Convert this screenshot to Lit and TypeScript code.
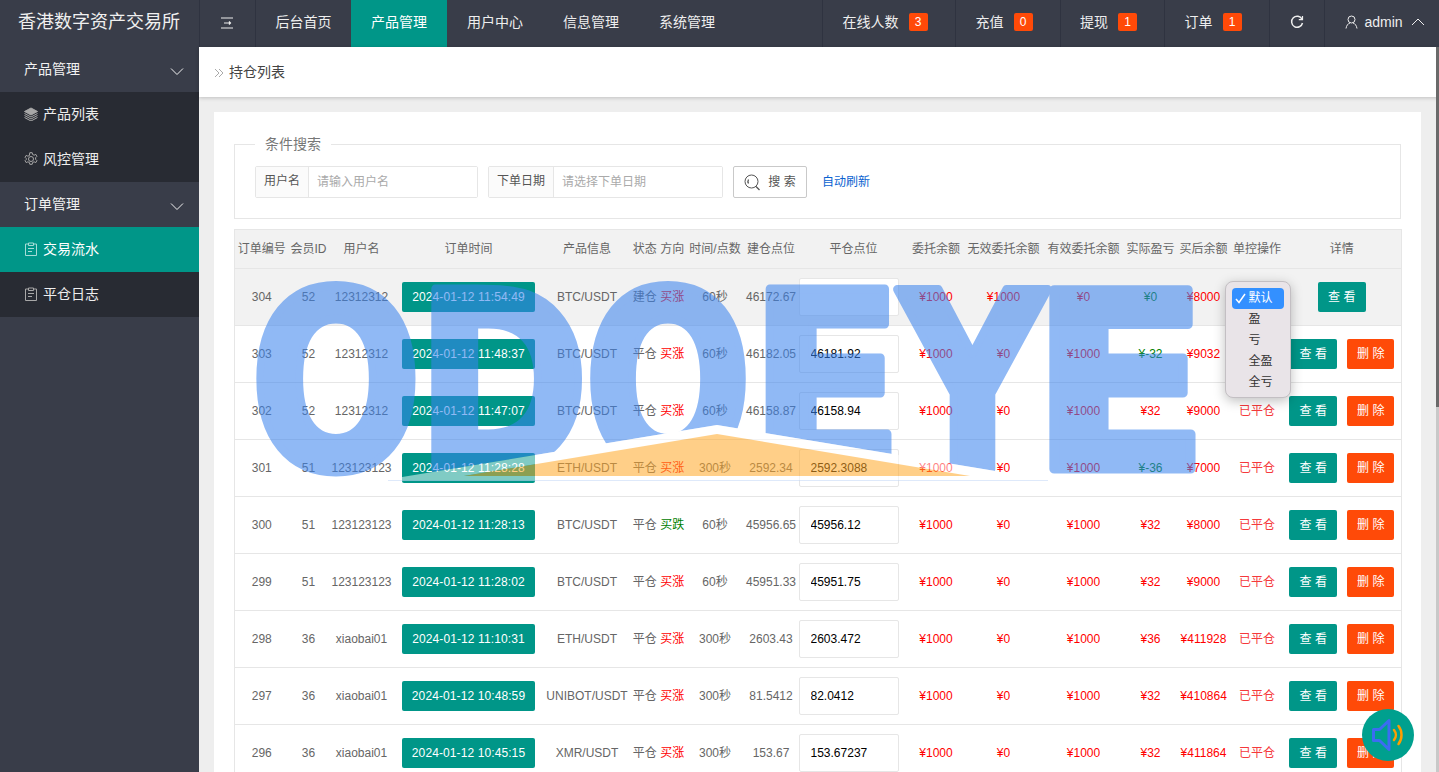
import { LitElement, html, css, svg } from 'lit';
import { customElement } from 'lit/decorators.js';

interface Row {
  id: number;
  uid: number;
  name: string;
  time: string;
  product: string;
  state: string;
  dir: string;
  up: boolean;
  period: string;
  open: string;
  close: string;
  entrust: string;
  invalid: string;
  valid: string;
  profit: string;
  loss: boolean;
  after: string;
}

const row = (
  id: number, uid: number, name: string, time: string, product: string, period: string,
  open: string, close: string, profit: string, after: string,
): Row => ({
  id, uid, name, time, product, state: '平仓', dir: '买涨', up: true, period, open, close,
  entrust: '¥1000', invalid: '¥0', valid: '¥1000', profit, loss: profit.includes('-'), after,
});

const ROWS: Row[] = [
  { ...row(304, 52, '12312312', '11:54:49', 'BTC/USDT', '60秒', '46172.67', '', '¥0', '¥8000'), state: '建仓', invalid: '¥1000', valid: '¥0', loss: true },
  row(303, 52, '12312312', '11:48:37', 'BTC/USDT', '60秒', '46182.05', '46181.92', '¥-32', '¥9032'),
  row(302, 52, '12312312', '11:47:07', 'BTC/USDT', '60秒', '46158.87', '46158.94', '¥32', '¥9000'),
  row(301, 51, '123123123', '11:28:28', 'ETH/USDT', '300秒', '2592.34', '2592.3088', '¥-36', '¥7000'),
  { ...row(300, 51, '123123123', '11:28:13', 'BTC/USDT', '60秒', '45956.65', '45956.12', '¥32', '¥8000'), dir: '买跌', up: false },
  row(299, 51, '123123123', '11:28:02', 'BTC/USDT', '60秒', '45951.33', '45951.75', '¥32', '¥9000'),
  row(298, 36, 'xiaobai01', '11:10:31', 'ETH/USDT', '300秒', '2603.43', '2603.472', '¥36', '¥411928'),
  row(297, 36, 'xiaobai01', '10:48:59', 'UNIBOT/USDT', '300秒', '81.5412', '82.0412', '¥32', '¥410864'),
  row(296, 36, 'xiaobai01', '10:45:15', 'XMR/USDT', '300秒', '153.67', '153.67237', '¥32', '¥411864'),
];

const HEADS = ['订单编号', '会员ID', '用户名', '订单时间', '产品信息', '状态 方向', '时间/点数', '建仓点位', '平仓点位', '委托余额', '无效委托余额', '有效委托余额', '实际盈亏', '买后余额', '单控操作', '详情'];
const WIDTHS = [54, 40, 72, 136, 95, 54, 59, 53, 102, 66, 76, 84, 50, 56, 51, 119];
// columns whose text sits off the middle of the cell
const CELL_CLASS: Record<number, string> = { 2: 'n3', 4: 'n5', 8: 'n9', 9: 'n10' };
const MENU = ['默认', '盈', '亏', '全盈', '全亏'];

// letters of the logo laid over the page: [char, x, width]
const LOGO: [string, number, number][] = [
  ['O', 250, 172],
  ['D', 416, 173],
  ['O', 584, 168],
  ['E', 749, 155],
  ['Y', 899, 147],
  ['E', 1030, 180],
];

const chevron = (up = false) => html`<svg class="chev" width="14" height="14" viewBox="0 0 14 14" fill="none" stroke="currentColor" stroke-width="1"><path d=${up ? 'M1 10l6-6 6 6' : 'M1 4.500l6 6 6-6'}></path></svg>`;
const clipboard = html`<svg width="14" height="14" viewBox="0 0 14 14" fill="none" stroke="currentColor" stroke-width="1"><path d="M4 2H1.500v11.500h11V2H10"></path><path d="M4.500 1h5v2.500h-5zM4 6.500h6M4 9.500h4"></path></svg>`;

@customElement('app-root')
export class AppRoot extends LitElement {
  static styles = css`
    :host {
      display: block;
      position: relative;
      width: 1439px;
      height: 772px;
      overflow: hidden;
      font-family: "Liberation Sans", "Noto Sans CJK SC", sans-serif;
      font-size: 12px;
      line-height: 16px;
      color: #666;
      background: #eee;
    }
    * { box-sizing: border-box; }

    .top {
      display: flex;
      height: 47px;
      background: #393d49;
      color: #fff;
      font-size: 14px;
      line-height: 20px;
    }
    .brand {
      width: 199px;
      padding-left: 18px;
      font-size: 18px;
      line-height: 44px;
      color: #f0f0f0;
    }
    .tn {
      display: flex;
      align-items: center;
      justify-content: center;
      padding-bottom: 3px;
      border-left: 1px solid #2f3340;
      color: #eee;
      white-space: nowrap;
    }
    .tn.toggle { width: 56px; padding: 0 2px 2px 0; }
    .tn.menu { width: 96px; border-left: 0; }
    .tn.toggle + .tn.menu { border-left: 1px solid #2f3340; }
    .tn.on { background: #009688; color: #fff; }
    .spacer { flex: 1; }
    .tn.count { padding-right: 8px; }
    .badge {
      display: inline-block;
      width: 19px;
      height: 18px;
      margin-left: 10px;
      border-radius: 2px;
      background: #ff4a08;
      color: #fff;
      font-size: 12px;
      line-height: 18px;
      text-align: center;
    }
    .user { padding-left: 6px; gap: 6px; }
    .user .chev { margin-left: 2px; }

    .body { display: flex; height: 725px; }
    .side { width: 199px; background: #393d49; color: #f2f2f2; font-size: 14px; line-height: 20px; }
    .si {
      display: flex;
      align-items: center;
      height: 45px;
      padding: 0 0 1px 24px;
      gap: 5px;
    }
    .si.sub { background: #282b33; color: #eee; }
    .si.sub svg { color: #a8a8a8; }
    .si.on { background: #009688; color: #fff; }
    .si.on svg { color: #a6dcd6; }
    .si.head { justify-content: space-between; padding-right: 15px; }
    .si.head .chev { margin-top: 3px; }

    .main { flex: 1; min-width: 0; }
    .crumb {
      display: flex;
      align-items: center;
      gap: 5px;
      height: 50px;
      padding-left: 15px;
      padding-bottom: 1px;
      background: #fff;
      box-shadow: 0 1px 4px rgba(0, 0, 0, .2);
      font-size: 14px;
      line-height: 20px;
      color: #444;
    }
    .crumb svg { margin-top: 2px; color: #aaa; }
    .card {
      margin: 15px 18px 0 15px;
      padding: 20px;
      background: #fff;
    }
    fieldset {
      margin: 2px 0 0;
      padding: 12px 20px 20px;
      border: 1px solid #e6e6e6;
    }
    legend { padding: 0 10px; font-size: 14px; line-height: 20px; color: #777; }
    .search { display: flex; gap: 10px; align-items: center; }
    .grp { display: flex; height: 32px; border: 1px solid #e6e6e6; border-radius: 2px; }
    .grp label {
      padding: 0 8px;
      line-height: 29px;
      background: #fbfbfb;
      border-right: 1px solid #e6e6e6;
      color: #555;
      white-space: nowrap;
    }
    .grp input {
      border: 0;
      outline: 0;
      padding: 0 8px;
      font: inherit;
      background: #fff;
    }
    .grp input::placeholder { color: #aaa; }
    .g1 { width: 223px; }
    .g2 { width: 235px; }
    .g1 input, .g2 input { flex: 1; min-width: 0; }
    .sbtn {
      display: flex;
      align-items: center;
      justify-content: center;
      gap: 7px;
      width: 74px;
      height: 32px;
      border: 1px solid #c9c9c9;
      border-radius: 2px;
      color: #555;
    }
    .link { margin-left: 5px; color: #0a62d0; }

    table {
      width: 1167px;
      margin-top: 10px;
      table-layout: fixed;
      border-collapse: collapse;
      border: 1px solid #e6e6e6;
    }
    th, td {
      padding: 0;
      text-align: center;
      font-weight: 400;
      white-space: nowrap;
      border-bottom: 1px solid #e6e6e6;
    }
    th { height: 39px; background: #f2f2f2; color: #666; }
    td { height: 57px; position: relative; }
    tr.hl td { background: #f2f2f2; }
    .n3 { padding-right: 6px; }
    .n5 { padding-left: 6px; }
    th.n9 { padding-left: 10px; }
    .n10 { padding-left: 7px; }
    .red { color: #f00; }
    .green { color: #008000; }
    .closed { color: #f5393c; }
    .tbtn, .btn {
      display: inline-block;
      height: 30px;
      border-radius: 2px;
      color: #fff;
      line-height: 30px;
      text-align: center;
    }
    .tbtn { width: 133px; background: #009688; letter-spacing: .1px; }
    .btn { width: 48px; background: #009688; }
    .btn.del { width: 47px; background: #ff4a08; margin-left: 10px; }
    .price {
      display: block;
      width: 100px;
      height: 38px;
      margin: 0 auto;
      padding-left: 11px;
      border: 1px solid #e6e6e6;
      border-radius: 2px;
      outline: 0;
      background: #fff;
      color: #000;
      font: inherit;
    }

    .logo { position: absolute; left: 0; top: 0; z-index: 10; pointer-events: none; }
    .logo text {
      font-family: "DejaVu Sans", sans-serif;
      font-weight: 700;
      font-size: 246px;
      fill: rgb(58, 130, 238);
      stroke: rgb(58, 130, 238);
      stroke-width: 9px;
      stroke-linejoin: round;
    }

    .pop {
      position: absolute;
      z-index: 20;
      left: -7px;
      top: 12px;
      width: 66px;
      height: 117px;
      padding: 6px 6px 0;
      border: 1px solid #c3bfc3;
      border-radius: 8px;
      background: #e9e4e8;
      box-shadow: 0 3px 12px rgba(0, 0, 0, .25);
      color: #333;
      text-align: left;
    }
    .opt {
      position: relative;
      height: 21px;
      padding-left: 17px;
      line-height: 20px;
      border-radius: 4px;
    }
    .opt.on { background: #3390ff; color: #fff; }
    .opt svg { position: absolute; left: 3px; top: 5px; }

    .bar { position: absolute; right: 0; top: 47px; bottom: 0; width: 3px; background: #c8c8c8; }
    .bar i { display: block; height: 360px; background: #6a6a6a; }

    .horn {
      position: absolute;
      z-index: 30;
      left: 1362px;
      top: 709px;
      width: 52px;
      height: 52px;
      border-radius: 50%;
      background: #00a08e;
    }
  `;

  private logo() {
    return html`<svg class="logo" width="1439" height="772" viewBox="0 0 1439 772">
      <defs>
        <clipPath id="cut"><path d="M0 0H1439V480H1050L717 425 384 480H0Z"></path></clipPath>
      </defs>
      <g clip-path="url(#cut)" opacity=".56">
        ${LOGO.map(([c, x, w]) => svg`<text x=${x} y="469" textLength=${w} lengthAdjust="spacingAndGlyphs">${c}</text>`)}
      </g>
      <path d="M384 480 717 425 1050 480ZM464 476H970L717 434Z" fill="#fff" fill-rule="evenodd" opacity=".5"></path>
      <path d="M464 476 717 434 970 476Z" fill="#ffa726" opacity=".55"></path>
      <path d="M388 480.500H1048" stroke="#c9dcf7" stroke-width="1" opacity=".6"></path>
    </svg>`;
  }

  private popup() {
    return html`<div class="pop">
      ${MENU.map((m, i) => html`<div class="opt ${i === 0 ? 'on' : ''}">
        ${i === 0 ? html`<svg width="11" height="11" viewBox="0 0 11 11" fill="none" stroke="#fff" stroke-width="1.500"><path d="M1 6l3 3.500 6-8.500"></path></svg>` : ''}${m}
      </div>`)}
    </div>`;
  }

  private tr(r: Row, i: number) {
    return html`<tr class=${i === 0 ? 'hl' : ''}>
      <td>${r.id}</td>
      <td>${r.uid}</td>
      <td class="n3">${r.name}</td>
      <td><span class="tbtn">2024-01-12 ${r.time}</span></td>
      <td class="n5">${r.product}</td>
      <td>${r.state} <span class=${r.up ? 'red' : 'green'}>${r.dir}</span></td>
      <td>${r.period}</td>
      <td>${r.open}</td>
      <td><input class="price" .value=${r.close} /></td>
      <td class="red n10">${r.entrust}</td>
      <td class="red">${r.invalid}</td>
      <td class="red">${r.valid}</td>
      <td class=${r.loss ? 'green' : 'red'}>${r.profit}</td>
      <td class="red">${r.after}</td>
      <td class="closed">${i === 0 ? this.popup() : '已平仓'}</td>
      <td>
        <span class="btn">查 看</span>${i === 0 ? '' : html`<span class="btn del">删 除</span>`}
      </td>
    </tr>`;
  }

  render() {
    return html`
      <div class="top">
        <div class="brand">香港数字资产交易所</div>
        <div class="tn toggle">
          <svg width="14" height="12" viewBox="0 0 14 12" fill="none" stroke="currentColor" stroke-width="1.200"><path d="M1 1h12M1 11h12M4 6h6M9 4.500 10.500 6 9 7.500"></path></svg>
        </div>
        <div class="tn menu">后台首页</div>
        <div class="tn menu on">产品管理</div>
        <div class="tn menu">用户中心</div>
        <div class="tn menu">信息管理</div>
        <div class="tn menu">系统管理</div>
        <div class="spacer"></div>
        <div class="tn count" style="width:133px">在线人数<span class="badge">3</span></div>
        <div class="tn count" style="width:105px">充值<span class="badge">0</span></div>
        <div class="tn count" style="width:104px">提现<span class="badge">1</span></div>
        <div class="tn count" style="width:105px">订单<span class="badge">1</span></div>
        <div class="tn" style="width:55px">
          <svg width="14" height="14" viewBox="0 0 14 14" fill="none" stroke="currentColor" stroke-width="1.500"><path d="M12 4.200A5.500 5.500 0 1 0 12.500 8"></path><path d="M12.500 1v3.700H8.800" stroke-width="1.200"></path></svg>
        </div>
        <div class="tn user" style="width:115px">
          <svg width="13" height="14" viewBox="0 0 13 14" fill="none" stroke="currentColor" stroke-width="1"><circle cx="6.500" cy="4.500" r="3.500"></circle><path d="M1 13.500c.5-3 2-5 4-5.500M12 13.500c-.5-3-2-5-4-5.500"></path></svg>
          admin${chevron(true)}
        </div>
      </div>

      <div class="body">
        <div class="side">
          <div class="si head">产品管理${chevron()}</div>
          <div class="si sub">
            <svg width="14" height="14" viewBox="0 0 14 14" fill="none" stroke="currentColor" stroke-width="1"><path d="M7 1 .5 4.500 7 8l6.500-3.500z" fill="currentColor"></path><path d="M.5 6.500 7 10l6.500-3.500M.5 8.500 7 12l6.500-3.500M.5 10.500 7 14l6.500-3.500"></path></svg>
            产品列表
          </div>
          <div class="si sub">
            <svg width="14" height="14" viewBox="0 0 14 14" fill="none" stroke="currentColor" stroke-width="1"><circle cx="7" cy="7" r="2.500"></circle><path d="M5.800.7h2.400l.4 1.800 1.500.7 1.700-.8 1.100 2-1.300 1.300v1.600l1.300 1.300-1.100 2-1.700-.8-1.500.7-.4 1.800H5.800l-.4-1.800-1.500-.7-1.700.8-1.100-2 1.300-1.300V6.700L1.100 5.400l1.100-2 1.700.8 1.500-.7z"></path></svg>
            风控管理
          </div>
          <div class="si head">订单管理${chevron()}</div>
          <div class="si sub on">${clipboard}交易流水</div>
          <div class="si sub">${clipboard}平仓日志</div>
        </div>

        <div class="main">
          <div class="crumb">
            <svg width="10" height="10" viewBox="0 0 10 10" fill="none" stroke="currentColor" stroke-width="1"><path d="M1 1l4 4-4 4M5 1l4 4-4 4"></path></svg>
            持仓列表
          </div>
          <div class="card">
            <fieldset>
              <legend>条件搜索</legend>
              <div class="search">
                <div class="grp g1"><label>用户名</label><input placeholder="请输入用户名" /></div>
                <div class="grp g2"><label>下单日期</label><input placeholder="请选择下单日期" /></div>
                <div class="sbtn">
                  <svg width="17" height="17" viewBox="0 0 17 17" fill="none" stroke="currentColor" stroke-width="1"><circle cx="7.500" cy="7.500" r="6.500"></circle><path d="M4.500 5.500a4 4 0 0 0 0 4M12 12.500l3.500 3.500" stroke-width="1.300"></path></svg>
                  <span>搜 索</span>
                </div>
                <span class="link">自动刷新</span>
              </div>
            </fieldset>
            <table>
              <colgroup>${WIDTHS.map((w) => html`<col style="width:${w}px" />`)}</colgroup>
              <thead>
                <tr>${HEADS.map((h, i) => html`<th class=${CELL_CLASS[i] ?? ''}>${h}</th>`)}</tr>
              </thead>
              <tbody>${ROWS.map((r, i) => this.tr(r, i))}</tbody>
            </table>
          </div>
        </div>
      </div>

      ${this.logo()}
      <div class="bar"><i></i></div>
      <div class="horn">
        <svg width="52" height="52" viewBox="0 0 52 52" fill="none">
          <path d="M11.500 20.500h6L27 11.500v29l-9.500-9h-6z" stroke="#3b6cf2" stroke-width="3" stroke-linejoin="round"></path>
          <path d="M32 21c2.500 3 2.500 7 0 10" stroke="#ff9d00" stroke-width="2.500" stroke-linecap="round"></path>
          <path d="M36.500 17c4 5 4 13 0 18" stroke="#ff9d00" stroke-width="2.500" stroke-linecap="round"></path>
        </svg>
      </div>
    `;
  }
}
